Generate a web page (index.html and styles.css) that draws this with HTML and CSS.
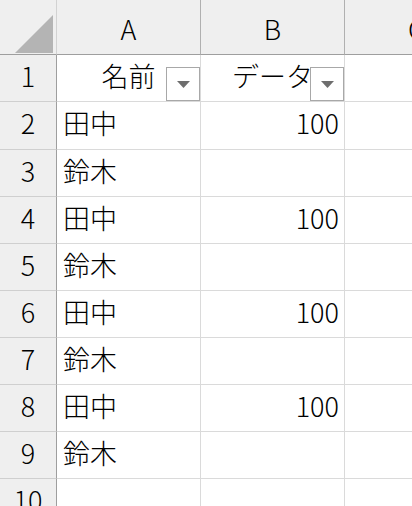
FILE: index.html
```html
<!DOCTYPE html>
<html lang="ja">
<head>
<meta charset="utf-8">
<link rel="stylesheet" href="styles.css">
</head>
<body>
<div class="viewport">
  <div class="sheet">
    <div class="cell corner"><svg class="corner-tri" width="38" height="38" viewBox="0 0 38 38"><polygon points="0,38 38,38 38,0" fill="#b4b4b4"/></svg></div>
    <div class="cell colhdr">A</div>
    <div class="cell colhdr">B</div>
    <div class="cell colhdr">C</div>

    <div class="cell rowhdr">1</div>
    <div class="cell body center filter">名前<span class="dd"><svg width="13" height="7" viewBox="0 0 13 7"><polygon points="0,0 13,0 6.5,7" fill="#6e6e6e"/></svg></span></div>
    <div class="cell body center filter">データ<span class="dd"><svg width="13" height="7" viewBox="0 0 13 7"><polygon points="0,0 13,0 6.5,7" fill="#6e6e6e"/></svg></span></div>
    <div class="cell body"></div>

    <div class="cell rowhdr">2</div>
    <div class="cell body">田中</div>
    <div class="cell body num">100</div>
    <div class="cell body"></div>

    <div class="cell rowhdr">3</div>
    <div class="cell body">鈴木</div>
    <div class="cell body num"></div>
    <div class="cell body"></div>

    <div class="cell rowhdr">4</div>
    <div class="cell body">田中</div>
    <div class="cell body num">100</div>
    <div class="cell body"></div>

    <div class="cell rowhdr">5</div>
    <div class="cell body">鈴木</div>
    <div class="cell body num"></div>
    <div class="cell body"></div>

    <div class="cell rowhdr">6</div>
    <div class="cell body">田中</div>
    <div class="cell body num">100</div>
    <div class="cell body"></div>

    <div class="cell rowhdr">7</div>
    <div class="cell body">鈴木</div>
    <div class="cell body num"></div>
    <div class="cell body"></div>

    <div class="cell rowhdr">8</div>
    <div class="cell body">田中</div>
    <div class="cell body num">100</div>
    <div class="cell body"></div>

    <div class="cell rowhdr">9</div>
    <div class="cell body">鈴木</div>
    <div class="cell body num"></div>
    <div class="cell body"></div>

    <div class="cell rowhdr">10</div>
    <div class="cell body"></div>
    <div class="cell body"></div>
    <div class="cell body"></div>
  </div>
</div>
</body>
</html>
```

FILE: styles.css
```css
html, body {
  margin: 0;
  padding: 0;
  background: #ffffff;
  overflow: hidden;
}

.viewport {
  width: 412px;
  height: 506px;
  overflow: hidden;
}

.sheet {
  display: grid;
  grid-template-columns: 57px 144px 144px 144px;
  grid-template-rows: 55px 47px 48px repeat(7, 47px) 47px;
  width: 489px;
  font-family: "Noto Sans CJK JP", "Noto Sans", sans-serif;
  font-size: 27px;
  font-weight: 300;
  color: #000;
}

.cell {
  box-sizing: border-box;
  border-right: 1px solid #dadada;
  border-bottom: 1px solid #dadada;
  line-height: 42px;
  white-space: nowrap;
  overflow: visible;
}

.corner {
  background: #efefef;
  border-right-color: #d2d2d2;
  border-bottom-color: #9e9e9e;
  display: flex;
  justify-content: flex-end;
  align-items: flex-end;
  padding: 0 3px 1px 0;
}

.corner-tri {
  display: block;
}

.colhdr {
  background: #efefef;
  border-right-color: #b0b0b0;
  border-bottom-color: #9e9e9e;
  text-align: center;
  line-height: 54px;
  padding-top: 2px;
}

.rowhdr {
  background: #efefef;
  border-right-color: #9e9e9e;
  border-bottom-color: #cfcfcf;
  text-align: center;
}

.body {
  padding: 0 5px 0 6px;
}

.center {
  text-align: center;
  padding: 0;
}

.num {
  text-align: right;
}

.filter {
  position: relative;
}

.dd {
  position: absolute;
  right: 0;
  bottom: 0;
  width: 34px;
  height: 34px;
  box-sizing: border-box;
  border: 1px solid #a8a8a8;
  background: #ffffff;
  display: flex;
  align-items: center;
  justify-content: center;
}

.dd svg {
  display: block;
}
```
